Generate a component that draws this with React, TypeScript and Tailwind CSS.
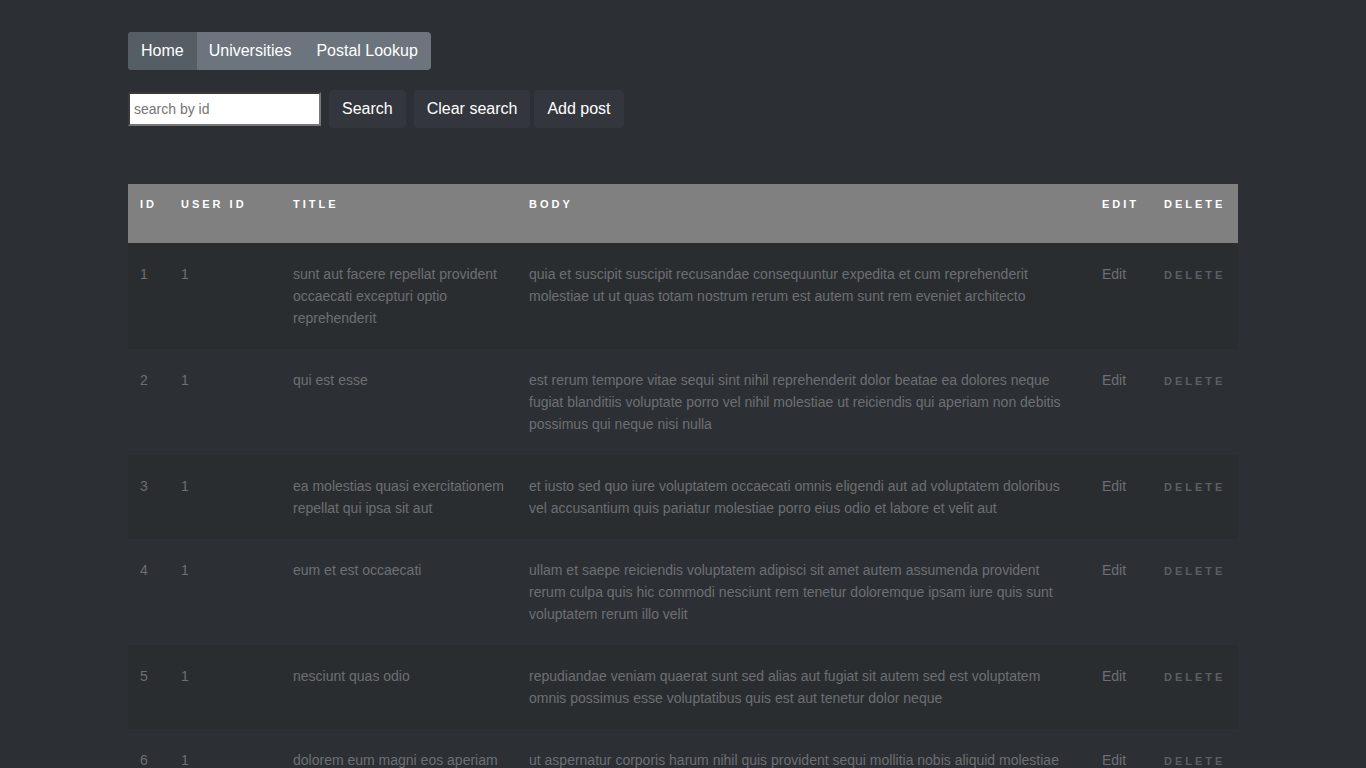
import React from 'react';

interface Post {
  id: number;
  userId: number;
  title: string;
  body: string;
}

const posts: Post[] = [
  {
    id: 1,
    userId: 1,
    title: 'sunt aut facere repellat provident occaecati excepturi optio reprehenderit',
    body: 'quia et suscipit suscipit recusandae consequuntur expedita et cum reprehenderit molestiae ut ut quas totam nostrum rerum est autem sunt rem eveniet architecto',
  },
  {
    id: 2,
    userId: 1,
    title: 'qui est esse',
    body: 'est rerum tempore vitae sequi sint nihil reprehenderit dolor beatae ea dolores neque fugiat blanditiis voluptate porro vel nihil molestiae ut reiciendis qui aperiam non debitis possimus qui neque nisi nulla',
  },
  {
    id: 3,
    userId: 1,
    title: 'ea molestias quasi exercitationem repellat qui ipsa sit aut',
    body: 'et iusto sed quo iure voluptatem occaecati omnis eligendi aut ad voluptatem doloribus vel accusantium quis pariatur molestiae porro eius odio et labore et velit aut',
  },
  {
    id: 4,
    userId: 1,
    title: 'eum et est occaecati',
    body: 'ullam et saepe reiciendis voluptatem adipisci sit amet autem assumenda provident rerum culpa quis hic commodi nesciunt rem tenetur doloremque ipsam iure quis sunt voluptatem rerum illo velit',
  },
  {
    id: 5,
    userId: 1,
    title: 'nesciunt quas odio',
    body: 'repudiandae veniam quaerat sunt sed alias aut fugiat sit autem sed est voluptatem omnis possimus esse voluptatibus quis est aut tenetur dolor neque',
  },
  {
    id: 6,
    userId: 1,
    title: 'dolorem eum magni eos aperiam quia',
    body: 'ut aspernatur corporis harum nihil quis provident sequi mollitia nobis aliquid molestiae perspiciatis et ea nemo ab reprehenderit accusantium quas voluptate dolores velit et doloremque molestiae',
  },
  {
    id: 7,
    userId: 1,
    title: 'magnam facilis autem',
    body: 'dolore placeat quibusdam ea quo vitae magni quis enim qui quis quo nemo aut saepe quidem repellat excepturi ut quia sunt ut sequi eos ea sed quas',
  },
];

const headCell = 'px-3 pt-[14px] pb-[30px] text-left align-top text-[11px] leading-[13px] font-bold uppercase tracking-[3px] text-white';
const bodyCell = 'px-3 py-5 align-top text-sm leading-[22px] text-[#6c6f73]';

export default function App() {
  return (
    <div className="min-h-screen bg-[#2c2f33] font-['Liberation_Sans',Arial,sans-serif]">
      <div className="w-[1110px] mx-auto pt-8">
        <nav className="inline-flex h-[38px] rounded bg-[#6c757d] overflow-hidden text-base text-white">
          <a className="flex items-center px-[13px] bg-[#565e65]">Home</a>
          <a className="flex items-center px-3">Universities</a>
          <a className="flex items-center px-[13px]">Postal Lookup</a>
        </nav>

        <div className="flex items-center mt-5 h-[38px]">
          <input
            type="text"
            placeholder="search by id"
            className="w-[193px] h-[34px] bg-white border-2 border-[#767676] border-t-[#3a3a3a] border-l-[#3a3a3a] px-[4px] text-sm text-black placeholder:text-[#757575] outline-none"
          />
          <button className="ml-2 h-[38px] px-[13px] rounded bg-[#33373d] text-base text-white">Search</button>
          <button className="ml-2 h-[38px] px-[13px] rounded bg-[#33373d] text-base text-white">Clear search</button>
          <button className="ml-1 h-[38px] px-[13px] rounded bg-[#33373d] text-base text-white">Add post</button>
        </div>

        <table className="mt-14 w-full table-fixed border-collapse">
          <colgroup>
            <col className="w-[41px]" />
            <col className="w-[112px]" />
            <col className="w-[236px]" />
            <col className="w-[573px]" />
            <col className="w-[62px]" />
            <col className="w-[86px]" />
          </colgroup>
          <thead>
            <tr className="bg-[#808080] h-[59px]">
              <th className={headCell}>Id</th>
              <th className={headCell}>User Id</th>
              <th className={headCell}>Title</th>
              <th className={headCell}>Body</th>
              <th className={headCell}>Edit</th>
              <th className={headCell}>Delete</th>
            </tr>
          </thead>
          <tbody>
            {posts.map((post) => (
              <tr key={post.id} className={post.id % 2 === 1 ? 'bg-[#2a2d30]' : ''}>
                <td className={bodyCell}>{post.id}</td>
                <td className={bodyCell}>{post.userId}</td>
                <td className={bodyCell}>{post.title}</td>
                <td className={bodyCell}>{post.body}</td>
                <td className={bodyCell}>Edit</td>
                <td className="px-3 pt-[19px] pb-5 align-top">
                  <span className="text-[11px] leading-[22px] font-bold tracking-[3px] text-[#5a5f66]">DELETE</span>
                </td>
              </tr>
            ))}
          </tbody>
        </table>
      </div>
    </div>
  );
}
